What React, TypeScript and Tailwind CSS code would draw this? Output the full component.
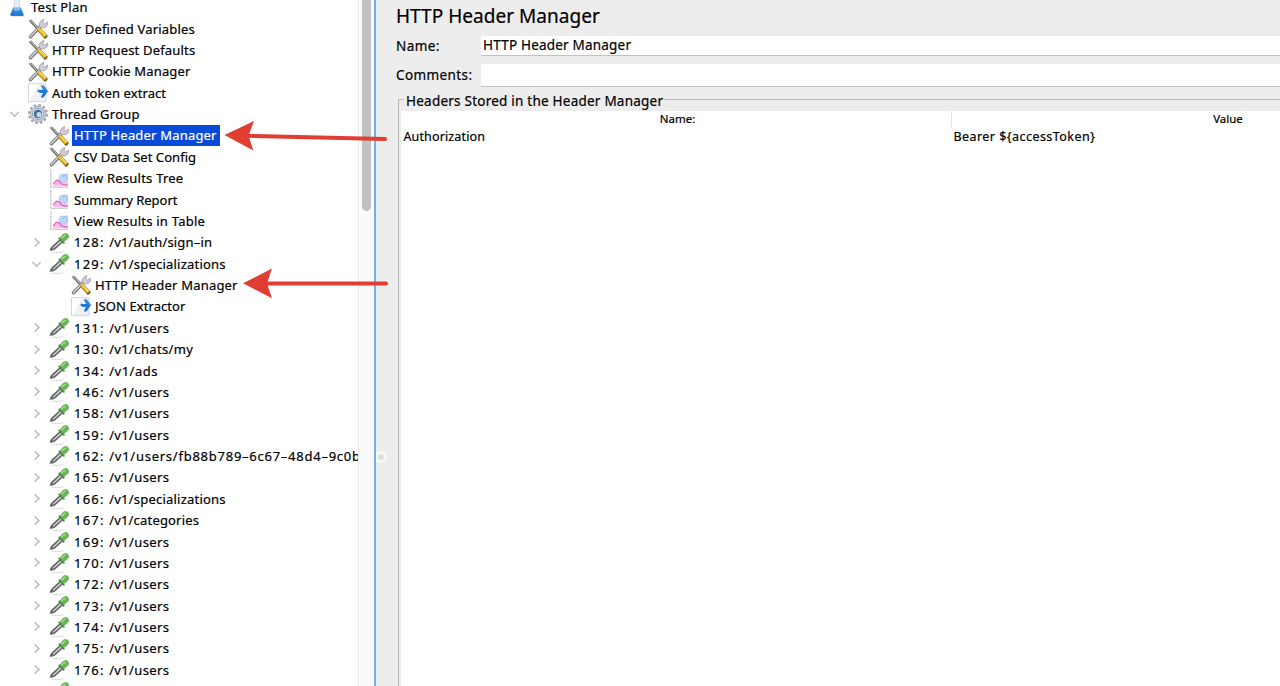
type IconKind = 'flask' | 'tools' | 'extract' | 'gear' | 'chart' | 'dropper';

type Node = {
  label: string;
  prefix?: string;
  icon: IconKind;
  depth: 0 | 1 | 2 | 3;
  toggle?: 'open' | 'closed';
  selected?: boolean;
  tracking: string;
};

const sampler = (id: string, path: string, tracking = 'tracking-[0.22px]'): Node => ({
  prefix: id ? `${id}: ` : '',
  label: path,
  icon: 'dropper',
  depth: 2,
  toggle: 'closed',
  tracking,
});

const nodes: Node[] = [
  { label: 'Test Plan', icon: 'flask', depth: 0, tracking: 'tracking-[0.25px]' },
  { label: 'User Defined Variables', icon: 'tools', depth: 1, tracking: 'tracking-[0.18px]' },
  { label: 'HTTP Request Defaults', icon: 'tools', depth: 1, tracking: 'tracking-[0.18px]' },
  { label: 'HTTP Cookie Manager', icon: 'tools', depth: 1, tracking: 'tracking-[0.15px]' },
  { label: 'Auth token extract', icon: 'extract', depth: 1, tracking: 'tracking-[0.08px]' },
  { label: 'Thread Group', icon: 'gear', depth: 1, toggle: 'open', tracking: 'tracking-[0.25px]' },
  { label: 'HTTP Header Manager', icon: 'tools', depth: 2, selected: true, tracking: 'tracking-[0.19px]' },
  { label: 'CSV Data Set Config', icon: 'tools', depth: 2, tracking: 'tracking-[0.05px]' },
  { label: 'View Results Tree', icon: 'chart', depth: 2, tracking: 'tracking-[0.23px]' },
  { label: 'Summary Report', icon: 'chart', depth: 2, tracking: 'tracking-normal' },
  { label: 'View Results in Table', icon: 'chart', depth: 2, tracking: 'tracking-[0.24px]' },
  sampler('128', '/v1/auth/sign–in', 'tracking-[0.18px]'),
  { ...sampler('129', '/v1/specializations'), toggle: 'open' },
  { label: 'HTTP Header Manager', icon: 'tools', depth: 3, tracking: 'tracking-[0.19px]' },
  { label: 'JSON Extractor', icon: 'extract', depth: 3, tracking: 'tracking-[0.07px]' },
  sampler('131', '/v1/users', 'tracking-[0.35px]'),
  sampler('130', '/v1/chats/my', 'tracking-[0.35px]'),
  sampler('134', '/v1/ads', 'tracking-[0.5px]'),
  sampler('146', '/v1/users', 'tracking-[0.35px]'),
  sampler('158', '/v1/users', 'tracking-[0.35px]'),
  sampler('159', '/v1/users', 'tracking-[0.35px]'),
  sampler('162', '/v1/users/fb88b789–6c67–48d4–9c0b', 'tracking-[0.75px]'),
  sampler('165', '/v1/users', 'tracking-[0.35px]'),
  sampler('166', '/v1/specializations'),
  sampler('167', '/v1/categories', 'tracking-[0.18px]'),
  sampler('169', '/v1/users', 'tracking-[0.35px]'),
  sampler('170', '/v1/users', 'tracking-[0.35px]'),
  sampler('172', '/v1/users', 'tracking-[0.35px]'),
  sampler('173', '/v1/users', 'tracking-[0.35px]'),
  sampler('174', '/v1/users', 'tracking-[0.35px]'),
  sampler('175', '/v1/users', 'tracking-[0.35px]'),
  sampler('176', '/v1/users', 'tracking-[0.35px]'),
  sampler('', ''),
];

const slotByDepth = ['w-[7px]', 'w-[28px] pl-[9px]', 'w-[49px] pl-[31px]', 'w-[71px]'];
const gapByDepth = ['ml-[2px]', 'ml-[2px]', 'ml-[3px]', 'ml-[2px]'];

function Icon({ kind }: { kind: IconKind }) {
  const box = 'block h-5 w-5 shrink-0 overflow-visible';
  switch (kind) {
    case 'flask':
      return (
        <svg viewBox="0 0 20 20" className={box}>
          <path d="M7.5 0h5v7l4.3 9.5q.3 1.6-1.5 1.7H4.7q-1.8-.1-1.5-1.7L7.5 7z" fill="#e6edf4" stroke="#c4d0dc" strokeWidth=".7" />
          <path d="M6.3 9.7h7.4l3 7q.1 1.3-1.4 1.4H4.7q-1.5-.1-1.4-1.4z" fill="#2a80d2" />
          <path d="M7 9.7h6l.8 2.2q-3.8 1.8-7.6 0z" fill="#7fbcf0" />
          <path d="M5 15.5q5 2.4 10 0l.5 1.5h-11z" fill="#1464b8" />
        </svg>
      );
    case 'tools':
      return (
        <svg viewBox="0 0 20 20" className={box}>
          <path d="M.5 1.4 3.2.6l8.2 8.6-2 2z" fill="#6e6d66" />
          <path d="M1.6 1.6 3.4 1.9l5.8 6.8" fill="none" stroke="#d0d0ca" strokeWidth="1" />
          <path d="m2.4 17.8 10.2-10.6" stroke="#717174" strokeWidth="3.4" strokeLinecap="round" />
          <path d="m2.4 17.5 10.2-10.6" stroke="#cdccd1" strokeWidth="1.8" strokeLinecap="round" />
          <path d="M11.6 8q-1.3-3.5 1.2-6 1.2-1.3 3.1-1.5l-1 3.4 1.7 1.2 2.9-2.1q.6 3.6-1.7 5-2.2 1.3-4.1 1z" fill="#d2cad5" stroke="#8f8a93" strokeWidth=".6" />
          <path d="m11.4 11 5.9 6.3" stroke="#a97d1b" strokeWidth="4.4" strokeLinecap="round" />
          <path d="m11.5 10.7 5.8 6.1" stroke="#efc32a" strokeWidth="3.1" strokeLinecap="round" />
          <path d="m12.3 10.5 5.4 5.6" stroke="#fdec92" strokeWidth="1" />
          <path d="m16 19.2 3.4-2.8" stroke="#55524a" strokeWidth="1.2" />
        </svg>
      );
    case 'extract':
      return (
        <svg viewBox="0 0 20 20" className={box}>
          <path d="M.5.7h17.4v18H.5z" fill="#eef1f5" stroke="#cfd3d8" strokeWidth=".9" />
          <path d="M1 1.2h10L2 18H1z" fill="#fff" />
          <path d="M9.6 6.4q2.8 1.2 5.6.4l-2.5-4.2h3l4.4 5.5-4.6 6.5h-2.8l2.3-4.6q-3.2.4-5.4-1.2z" fill="#2077d4" />
          <path d="m14.8 3.6 3.8 4.4" stroke="#5fa5ea" strokeWidth=".8" />
        </svg>
      );
    case 'gear':
      return (
        <svg viewBox="0 0 20 20" className={box}>
          <circle cx="10" cy="10" r="8.8" fill="none" stroke="#a2a9b0" strokeWidth="2.4" strokeDasharray="2.8 1.8" />
          <circle cx="10" cy="10" r="7.6" fill="#cfd4da" stroke="#9aa2aa" strokeWidth=".8" />
          <circle cx="10" cy="10" r="5.6" fill="#dce3ea" stroke="#8a97a6" strokeWidth=".8" />
          <circle cx="10" cy="10" r="4.2" fill="#426a9a" />
          <circle cx="11" cy="10.6" r="2.6" fill="#c4daef" />
        </svg>
      );
    case 'chart':
      return (
        <svg viewBox="0 0 20 20" className={box}>
          <path d="M1.8.5v18" fill="none" stroke="#bcb8c0" strokeWidth="1.4" strokeDasharray="1.4 .9" />
          <path d="M1.5 18.5h17.4" fill="none" stroke="#cbc7cf" strokeWidth=".9" />
          <path d="m4.4 17.6v-3.4l3.2-3 2.7.6 3.3 2.7 2.3-1.6 3 .7v4z" fill="#fbbce8" />
          <circle cx="14.2" cy="9.2" r="4.1" fill="#bfd6f7" stroke="#a3bfec" strokeWidth=".8" />
          <path d="M13.6 8.2q1.6-3 4.4-3.2v7.4" fill="none" stroke="#a3bfec" strokeWidth="1.1" />
          <path d="m4.2 14.8 3.3-3.6 2.6.6 2.6 3.2 5.9 1.4" fill="none" stroke="#dd62b6" strokeWidth="1.2" />
        </svg>
      );
    default:
      return (
        <svg viewBox="0 0 20 20" className={box}>
          <path d="M2.4 19.2q6 .6 12-.3" fill="none" stroke="#d9d4d9" strokeWidth="1" />
          <path d="M.6 17.8q.4-2.6 2-4.3l8-7.2 3.2 3.2-7.7 6.9q-2.6 1.6-5.5 1.4z" fill="#656865" />
          <path d="m3.6 15 8-7.4 1 1-8 7z" fill="#dfe1df" />
          <path d="m10.3 5.4 4.5 4.5" stroke="#4a7d42" strokeWidth="1.8" strokeLinecap="round" />
          <path d="m10.9 5 3.3-3.8q2.6-1.7 4.8.2 1.6 2.1-.3 4.2L14.6 8.8z" fill="#69b455" stroke="#57a049" strokeWidth=".6" />
          <path d="m13 4.8 3-2.6" stroke="#a8df96" strokeWidth="1.5" strokeLinecap="round" />
        </svg>
      );
  }
}

function Chevron({ open }: { open: boolean }) {
  return (
    <svg viewBox="0 0 12 12" className="block h-3 w-3 shrink-0" fill="none" stroke="#b8b8b8" strokeWidth="1.4">
      <path d={open ? 'M1.5 4 5.6 8.2 9.7 4' : 'M3.6 1.6 8 5.5 3.6 9.4'} />
    </svg>
  );
}

function TreeRow({ node }: { node: Node }) {
  return (
    <div className="flex h-[21.39px] shrink-0 items-center">
      <div className={`${slotByDepth[node.depth]} flex shrink-0 items-center`}>
        {node.toggle && <Chevron open={node.toggle === 'open'} />}
      </div>
      <Icon kind={node.icon} />
      {node.label && (
        <span
          className={`${gapByDepth[node.depth]} flex h-[21px] items-center whitespace-pre pl-[2px] pr-[3px] pt-[0.4px] text-[13px] leading-none ${
            node.selected ? 'bg-[#0a4ad8] text-white' : 'text-black'
          }`}
        >
          {node.prefix && <span className="tracking-[1.2px]">{node.prefix}</span>}
          <span className={node.tracking}>{node.label}</span>
        </span>
      )}
    </div>
  );
}

function Field({ label, value, className }: { label: string; value: string; className: string }) {
  return (
    <div className="flex items-center">
      <label className="-mt-px w-[85px] shrink-0 text-[13.5px] leading-[18px] tracking-[0.4px]">{label}</label>
      <div
        className={`${className} flex flex-1 items-center border-b border-[#c2c2c2] bg-white pb-px pl-[2px] text-[13.5px] leading-[18px] tracking-[0.2px]`}
      >
        {value}
      </div>
    </div>
  );
}

export default function App() {
  return (
    <div className="relative flex h-[686px] w-[1280px] overflow-hidden bg-[#ededed] font-['Noto_Sans',sans-serif] text-black [-webkit-text-stroke:0.2px_currentColor]">
      <aside className="flex w-[358px] shrink-0 flex-col overflow-hidden bg-white">
        <div className="-mt-[3.2px] flex flex-col">
          {nodes.map((node, i) => (
            <TreeRow key={i} node={node} />
          ))}
        </div>
      </aside>
      <div className="flex w-4 shrink-0 justify-center border-l border-[#ececec] bg-[#fafafa]">
        <div className="-mt-2 h-[219px] w-[9px] rounded-full bg-[#c1c1c1]" />
      </div>
      <div className="w-[2px] shrink-0 bg-[#6db3e8]" />
      <div className="flex w-[20px] shrink-0 flex-col pt-[452px]">
        <div className="flex h-[10px] w-[10px] items-center justify-center bg-[#f9f9f9]">
          <div className="h-[6px] w-[6px] rounded-full bg-[#dedede]" />
        </div>
      </div>

      <main className="flex min-w-0 flex-1 flex-col">
        <h1 className="h-[36px] pt-[4px] text-[19px] leading-[25px] tracking-[0.03px]">HTTP Header Manager</h1>
        <Field label="Name:" value="HTTP Header Manager" className="h-[20px]" />
        <div className="h-[8px]" />
        <Field label="Comments:" value="" className="h-[23px]" />
        <section className="ml-[2px] mt-[5px] flex flex-1 flex-col">
          <div className="flex h-[19px] items-start">
            <div className="mt-[7px] h-3 w-[6px] border-l border-t border-[#b9b9b9]" />
            <h2 className="pl-[2px] pr-px text-[13.5px] leading-[18px] tracking-[0.23px]">
              Headers Stored in the Header Manager
            </h2>
            <div className="mt-[7px] h-px flex-1 bg-[#b9b9b9]" />
          </div>
          <div className="flex flex-1 border-l border-[#b9b9b9] pl-[2px]">
            <div className="flex flex-1 flex-col bg-white">
              <div className="flex h-[16px] items-center text-[11.5px] leading-[16px]">
                <div className="w-[551px] shrink-0 border-r border-[#e1e1e1] pl-[3px] text-center">Name:</div>
                <div className="w-[552px] shrink-0 text-center">Value</div>
              </div>
              <div className="flex h-[20px] items-center pt-px text-[12.5px]">
                <div className="w-[551px] shrink-0 pl-[2.4px] tracking-[0.15px]">Authorization</div>
                <div className="pl-[1.4px] tracking-[0.46px]">{'Bearer ${accessToken}'}</div>
              </div>
            </div>
          </div>
        </section>
      </main>

      <svg viewBox="0 0 1280 686" className="pointer-events-none absolute left-0 top-0 h-[686px] w-[1280px]">
        <g stroke="#e23d32" strokeWidth="4" strokeLinecap="round" fill="#e23d32">
          <path d="M246 135.7 385 139" />
          <path d="M264 283.4H386" />
          <path d="M224.5 135 254 121 248.5 135.8 253.3 150.5z" stroke="none" />
          <path d="M243 283.3 272 268.5 267 283.4 272 298.3z" stroke="none" />
        </g>
      </svg>
    </div>
  );
}
